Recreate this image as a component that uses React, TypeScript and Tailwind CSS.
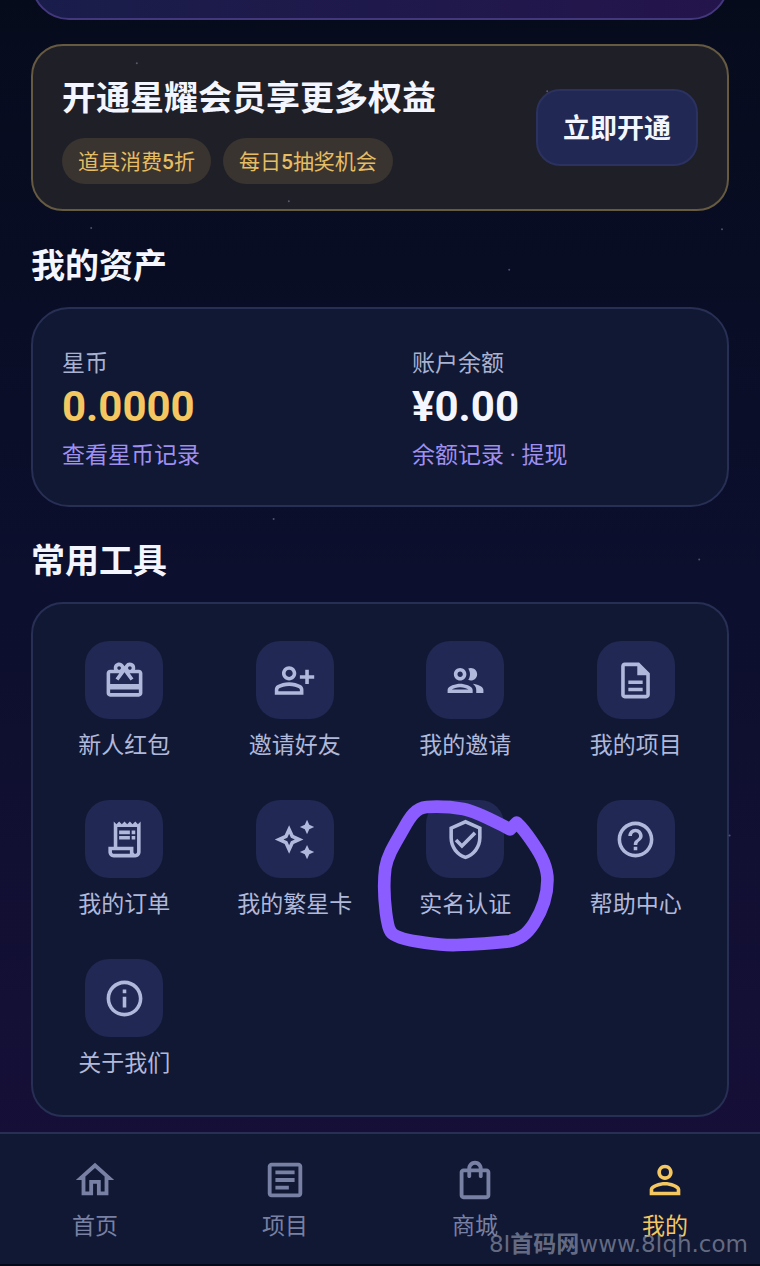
import type { IconType } from "react-icons";
import {
  MdHelpOutline,
  MdOutlineArticle,
  MdOutlineAutoAwesome,
  MdOutlineDescription,
  MdOutlineGroup,
  MdOutlineHome,
  MdOutlineInfo,
  MdOutlinePersonAddAlt,
  MdOutlineReceiptLong,
  MdOutlineRedeem,
  MdOutlineShoppingBag,
  MdOutlineVerifiedUser,
  MdPersonOutline,
} from "react-icons/md";

type Item = { label: string; icon: IconType; marked?: boolean; active?: boolean };

const tools: Item[] = [
  { label: "新人红包", icon: MdOutlineRedeem },
  { label: "邀请好友", icon: MdOutlinePersonAddAlt },
  { label: "我的邀请", icon: MdOutlineGroup },
  { label: "我的项目", icon: MdOutlineDescription },
  { label: "我的订单", icon: MdOutlineReceiptLong },
  { label: "我的繁星卡", icon: MdOutlineAutoAwesome },
  { label: "实名认证", icon: MdOutlineVerifiedUser, marked: true },
  { label: "帮助中心", icon: MdHelpOutline },
  { label: "关于我们", icon: MdOutlineInfo },
];

const tabs: Item[] = [
  { label: "首页", icon: MdOutlineHome },
  { label: "项目", icon: MdOutlineArticle },
  { label: "商城", icon: MdOutlineShoppingBag },
  { label: "我的", icon: MdPersonOutline, active: true },
];

const stars = [
  ["18%", "5%"],
  ["72%", "7.2%"],
  ["38%", "15.9%"],
  ["12%", "18%"],
  ["95%", "18.1%"],
  ["67%", "21.3%"],
  ["36%", "41%"],
  ["92%", "44.2%"],
  ["96%", "66%"],
];

function Stars() {
  return (
    <svg className="pointer-events-none absolute inset-0 h-full w-full" aria-hidden="true">
      {stars.map(([cx, cy]) => (
        <circle key={cx} cx={cx} cy={cy} r="1" fill="#8d93b5" fillOpacity="0.5" />
      ))}
    </svg>
  );
}

// Hand-drawn ring around a tool
function Scribble() {
  return (
    <svg
      viewBox="45 55 540 465"
      className="pointer-events-none absolute -top-0.5 left-1/2 w-[180px] -translate-x-1/2"
      fill="none"
      stroke="#8b5cff"
      strokeWidth="38"
      strokeLinecap="round"
      strokeLinejoin="round"
      aria-hidden="true"
    >
      <path d="M450 149C400 124 355 97 310 88C270 81 230 80 200 82C168 84 150 112 132 145C105 192 83 225 76 265C70 310 73 360 78 400C82 430 86 448 92 456C104 474 150 483 195 489C235 495 260 497 290 496C345 494 395 491 440 486C480 481 502 462 522 431C548 390 565 345 562 290C558 248 535 213 512 180C494 154 485 143 470 129L450 149" />
    </svg>
  );
}

export default function App() {
  return (
    <div className="relative flex min-h-screen flex-col bg-linear-to-b from-[#060b1c] via-[#0c0f2d] via-45% to-[#180f3a] font-['Noto_Sans_CJK_SC',sans-serif] text-[#f4f6ff]">
      <main className="flex-1 px-[31px] pb-[15px]">
        {/* end of the profile card */}
        <div className="flex h-5 flex-col justify-end overflow-hidden">
          <div className="h-24 shrink-0 rounded-[38px] border-2 border-[#43377d] bg-linear-to-r from-[#191d4a] to-[#24144c]" />
        </div>

        <section className="mt-6 flex items-center justify-between rounded-[32px] border-2 border-[#665a40] bg-[#1f1f28] px-[29px] py-[25px]">
          <div>
            <h2 className="text-[34px] leading-[50px] font-bold">
              开通星耀会员享更多权益
            </h2>
            <ul className="mt-[17px] flex flex-wrap gap-3 text-[21px] leading-[44px] text-[#e6bd62]">
              <li className="rounded-full bg-[#39342f] px-4">
                道具消费<span className="font-[Roboto] font-medium">5</span>折
              </li>
              <li className="rounded-full bg-[#39342f] px-4">
                每日<span className="font-[Roboto] font-medium">5</span>抽奖机会
              </li>
            </ul>
          </div>
          <button className="h-[77px] shrink-0 rounded-3xl border-2 border-[#2b3260] bg-[#202853] px-[25px] text-[27px] font-bold">
            立即开通
          </button>
        </section>

        <h2 className="mt-[29px] mb-[19px] text-[34px] leading-[48px] font-bold">我的资产</h2>
        <section className="grid grid-cols-2 gap-x-16 rounded-[38px] border-2 border-[#272f55] bg-[#111833] px-[29px] pt-9 pb-[33px] text-[23px] leading-8">
          <div>
            <p className="text-[#a9b1d1]">星币</p>
            <p className="font-[Roboto] text-[42px] leading-[60px] font-bold text-[#f5c761]">
              0.0000
            </p>
            <a href="#coins" className="text-[#9f8ff0]">
              查看星币记录
            </a>
          </div>
          <div>
            <p className="text-[#a9b1d1]">账户余额</p>
            <p className="font-[Roboto] text-[42px] leading-[60px] font-bold">¥0.00</p>
            <p className="text-[#9f8ff0]">
              <a href="#balance">余额记录</a>
              <span className="font-[Roboto]"> · </span>
              <a href="#withdraw">提现</a>
            </p>
          </div>
        </section>

        <h2 className="mt-7 mb-[19px] text-[34px] leading-[48px] font-bold">常用工具</h2>
        <section className="rounded-[32px] border-2 border-[#272f55] bg-[#111833] px-1.5 pt-[37px] pb-[38px]">
          <ul className="grid grid-cols-4 gap-y-[41px]">
            {tools.map(({ label, icon: Icon, marked }) => (
              <li key={label} className="relative">
                <a href="#tool" className="flex flex-col items-center gap-2 text-[#b0b8db]">
                  <span className="flex size-[78px] items-center justify-center rounded-3xl bg-[#202853]">
                    <Icon className="size-[43px]" />
                  </span>
                  <span className="text-[23px] leading-8">{label}</span>
                </a>
                {marked && <Scribble />}
              </li>
            ))}
          </ul>
        </section>
      </main>

      <nav className="relative border-t-2 border-b-2 border-t-[#272f55] border-b-[#050818] bg-[#111833] pt-[23px] pb-6">
        <ul className="grid grid-cols-4">
          {tabs.map(({ label, icon: Icon, active }) => (
            <li key={label}>
              <a
                href="#tab"
                className={`flex flex-col items-center gap-[5px] ${active ? "text-[#f5c761]" : "text-[#7880a4]"}`}
              >
                <Icon className="size-[46px]" />
                <span className="text-[23px] leading-8">{label}</span>
              </a>
            </li>
          ))}
        </ul>
        <span className="pointer-events-none absolute right-3 bottom-1 font-['DejaVu_Sans','Noto_Sans_CJK_SC',sans-serif] text-[23px] leading-8 text-[#8b90a6]/70">
          8I<span className="font-bold">首码网</span>www.8Iqh.com
        </span>
      </nav>
      <Stars />
    </div>
  );
}
